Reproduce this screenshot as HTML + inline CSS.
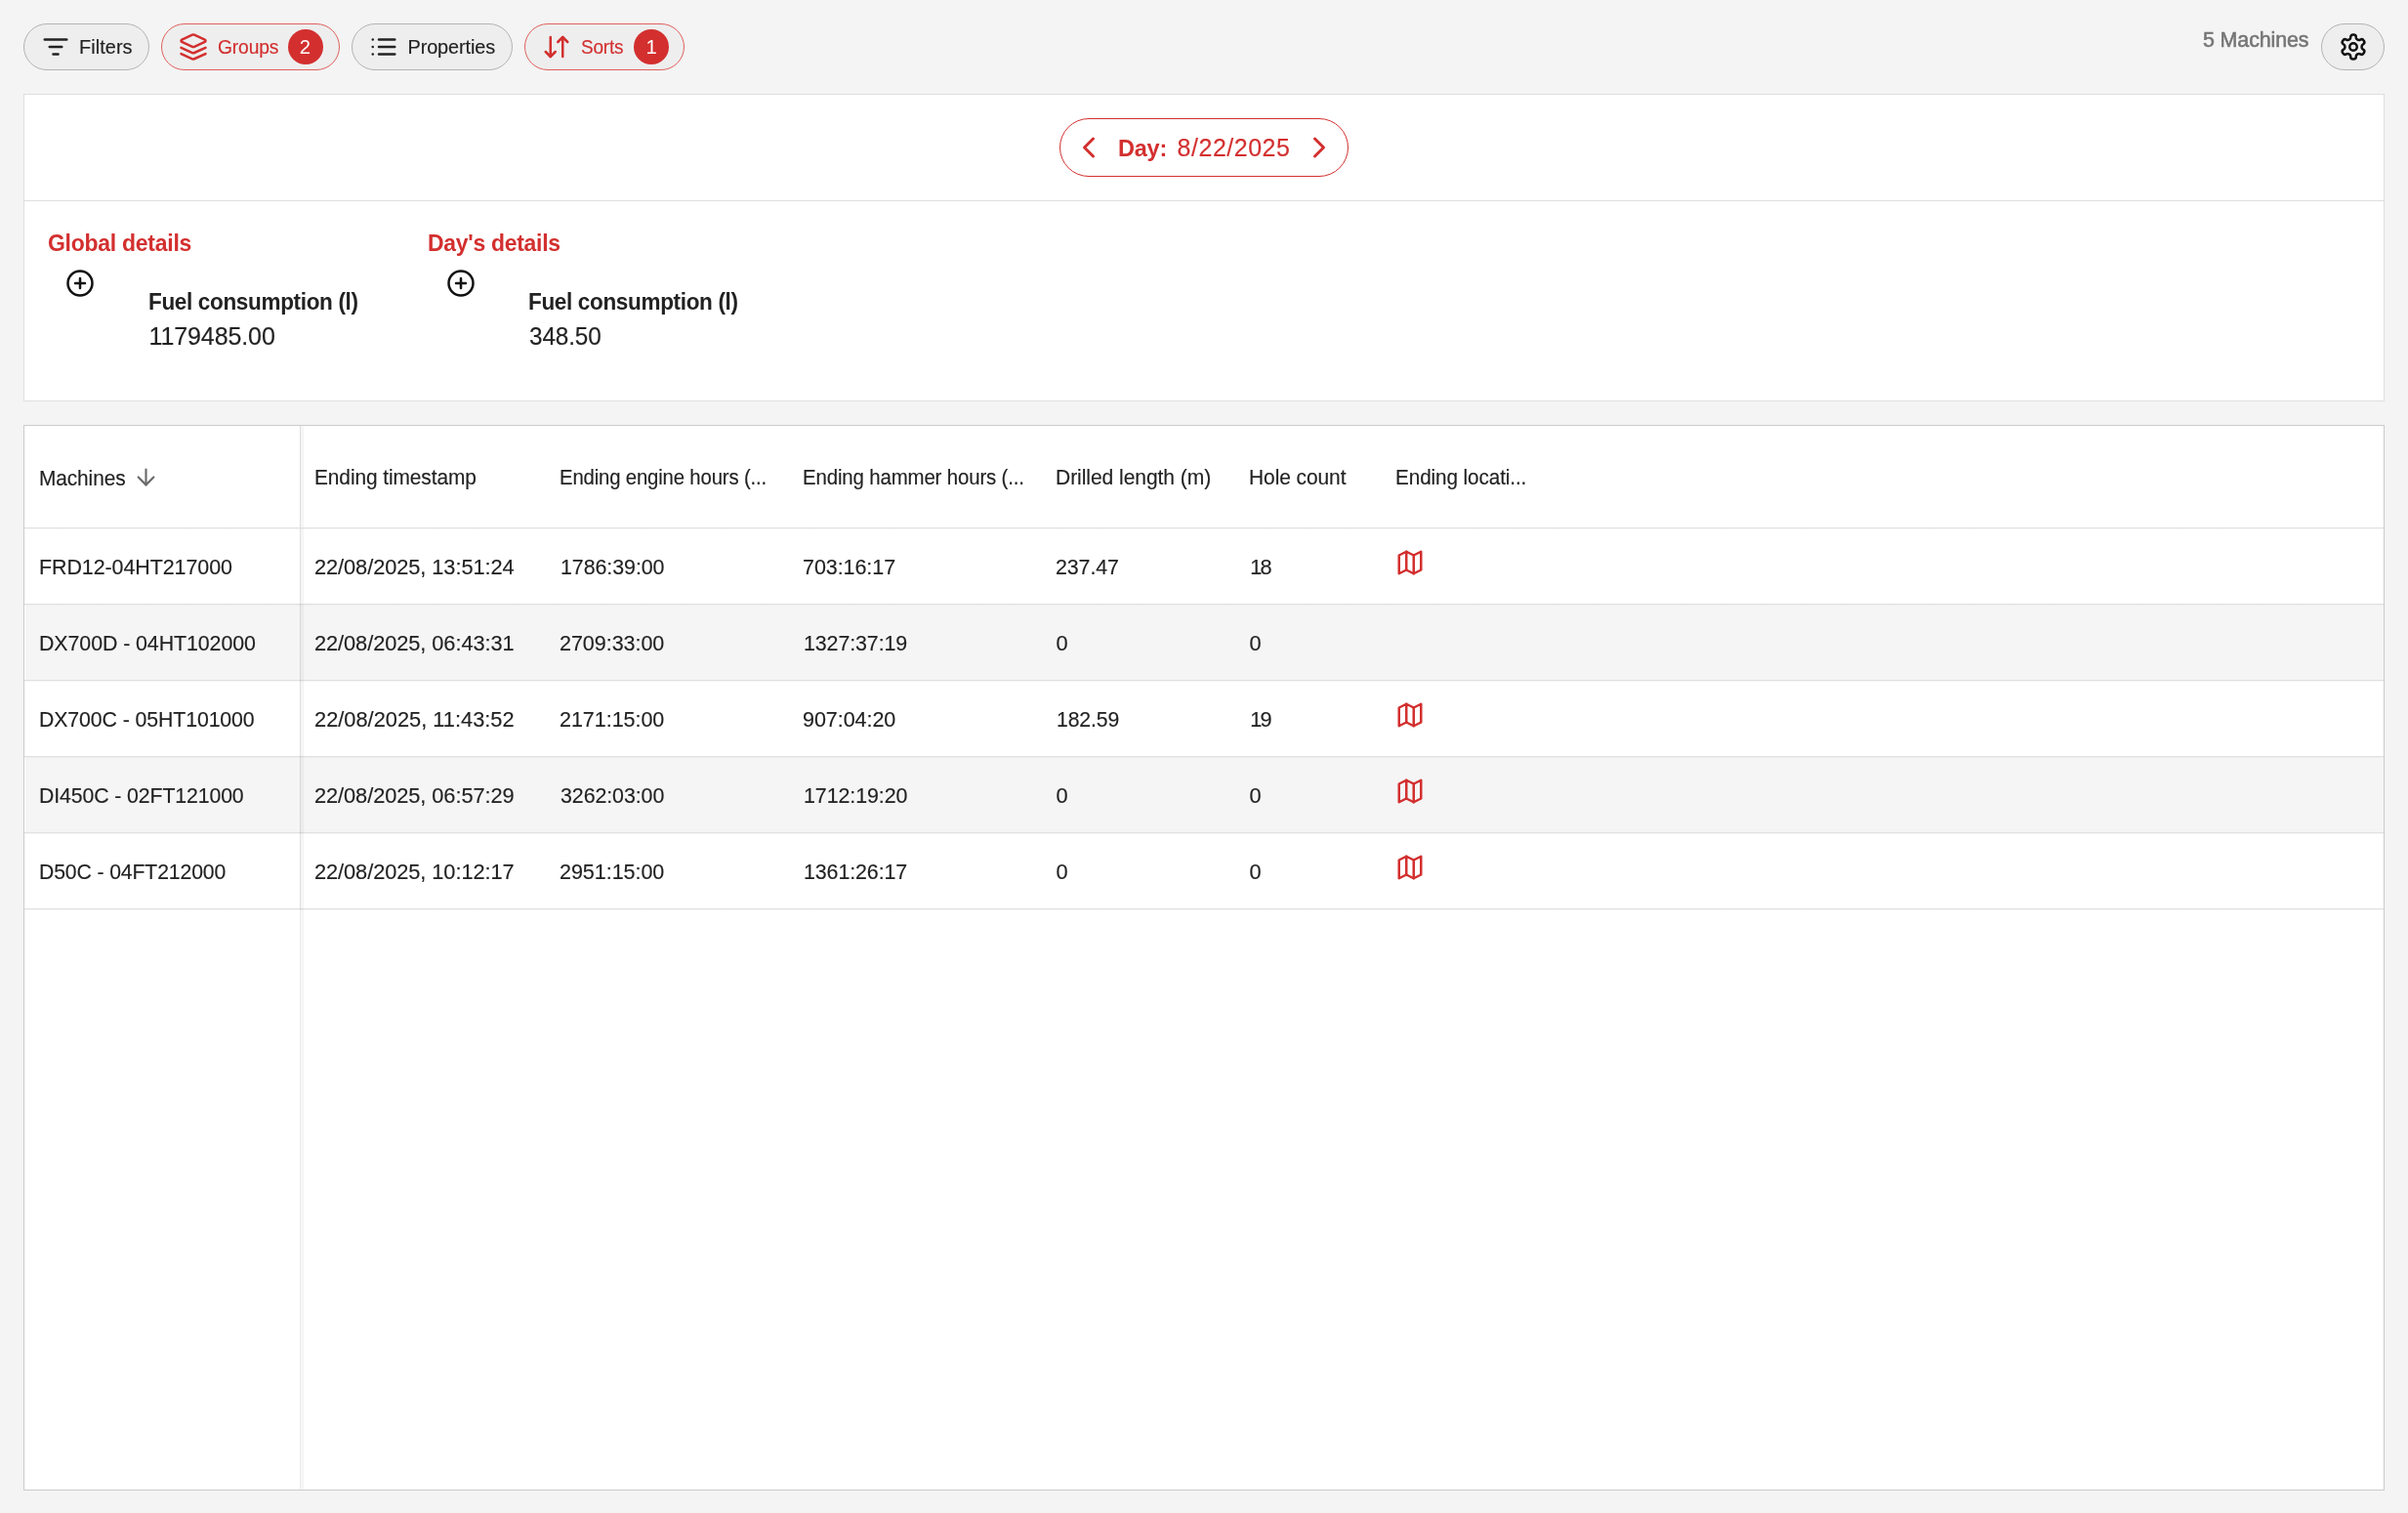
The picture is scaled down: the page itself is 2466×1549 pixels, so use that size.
<!DOCTYPE html>
<html lang="en"><head><meta charset="utf-8"><title>Machines</title>
<style>
html,body{margin:0;padding:0;}
body{width:2466px;height:1549px;background:#f4f4f4;position:relative;overflow:hidden;font-family:"Liberation Sans", sans-serif;}
.t{position:absolute;white-space:nowrap;line-height:40px;height:40px;display:block;transform-origin:0 0;}
#tx{position:absolute;left:0;top:0;width:2466px;height:1549px;will-change:transform;}
.i{position:absolute;display:block;overflow:visible;}
.b{position:absolute;box-sizing:border-box;}
.chip{position:absolute;box-sizing:border-box;top:24px;height:48px;border-radius:24px;background:#eeeeee;border:1px solid #b4b4b4;}
.chip.r{border-color:#e0605d;}
.badge{position:absolute;top:30px;width:36px;height:36px;border-radius:18px;background:#d32f2f;}
.panel{position:absolute;box-sizing:border-box;background:#fff;}
.hl{position:absolute;left:25px;width:2416px;height:2px;background:linear-gradient(to bottom,#e0e0e0 0,#e0e0e0 1px,rgba(224,224,224,0.3) 1px,rgba(224,224,224,0.3) 2px);}
</style></head>
<body>
<div class="chip" style="left:24px;width:129px"></div>
<div class="chip r" style="left:165px;width:183px"></div>
<div class="chip" style="left:360px;width:165px"></div>
<div class="chip r" style="left:537px;width:164px"></div>
<div class="chip" style="left:2377px;width:65px"></div>
<div class="badge" style="left:295px"></div>
<div class="badge" style="left:648.5px"></div>
<div class="panel" style="left:24px;top:96px;width:2418px;height:315px;border:1px solid #dedede"></div>
<div class="b" style="left:25px;top:204.5px;width:2416px;height:1px;background:#dedede"></div>
<div class="b" style="left:1085px;top:121px;width:296px;height:60px;border-radius:30px;border:1.5px solid #d32f2f"></div>
<div class="panel" style="left:24px;top:435px;width:2418px;height:1091px;border:1px solid #cbcbcb"></div>
<div class="b" style="left:25.5px;top:619px;width:2415px;height:78px;background:#f5f5f5"></div>
<div class="b" style="left:25.5px;top:775px;width:2415px;height:78px;background:#f5f5f5"></div>
<div class="hl" style="top:540px"></div>
<div class="hl" style="top:618px"></div>
<div class="hl" style="top:696px"></div>
<div class="hl" style="top:774px"></div>
<div class="hl" style="top:852px"></div>
<div class="hl" style="top:930px"></div>
<div class="b" style="left:307px;top:436px;width:5px;height:104px;background:linear-gradient(to right,rgba(0,0,0,0.135) 0,rgba(0,0,0,0.135) 1px,rgba(0,0,0,0.04) 1px,rgba(0,0,0,0.035) 3.5px,rgba(0,0,0,0) 5px)"></div>
<div class="b" style="left:307px;top:541px;width:5px;height:390px;background:linear-gradient(to right,rgba(0,0,0,0.12) 0,rgba(0,0,0,0.12) 1px,rgba(0,0,0,0.04) 1px,rgba(0,0,0,0.035) 3.5px,rgba(0,0,0,0) 5px)"></div>
<div class="b" style="left:307px;top:931px;width:5px;height:594px;background:linear-gradient(to right,rgba(0,0,0,0.07) 0,rgba(0,0,0,0.07) 1px,rgba(0,0,0,0.04) 1px,rgba(0,0,0,0.035) 3.5px,rgba(0,0,0,0) 5px)"></div>
<svg class="i" style="left:42px;top:33px" width="30" height="30" viewBox="0 0 24 24" fill="none" stroke="#222222" stroke-width="2" stroke-linecap="round" stroke-linejoin="round"><path d="M3 6h18"/><path d="M7 12h10"/><path d="M10 18h4"/></svg>
<svg class="i" style="left:183px;top:33px" width="30" height="30" viewBox="0 0 24 24" fill="none" stroke="#d32f2f" stroke-width="2" stroke-linecap="round" stroke-linejoin="round"><path d="m12.83 2.18a2 2 0 0 0-1.66 0L2.6 6.08a1 1 0 0 0 0 1.83l8.58 3.91a2 2 0 0 0 1.66 0l8.58-3.9a1 1 0 0 0 0-1.83Z"/><path d="m22 17.65-9.17 4.16a2 2 0 0 1-1.66 0L2 17.65"/><path d="m22 12.65-9.17 4.16a2 2 0 0 1-1.66 0L2 12.65"/></svg>
<svg class="i" style="left:378px;top:33px" width="30" height="30" viewBox="0 0 24 24" fill="none" stroke="#222222" stroke-width="2" stroke-linecap="round" stroke-linejoin="round"><path d="M8 6h13"/><path d="M8 12h13"/><path d="M8 18h13"/><path d="M3 6h.01"/><path d="M3 12h.01"/><path d="M3 18h.01"/></svg>
<svg class="i" style="left:555px;top:33px" width="30" height="30" viewBox="0 0 24 24" fill="none" stroke="#d32f2f" stroke-width="2" stroke-linecap="round" stroke-linejoin="round"><path d="m3 16 4 4 4-4"/><path d="M7 20V4"/><path d="m21 8-4-4-4 4"/><path d="M17 4v16"/></svg>
<svg class="i" style="left:2395px;top:33px" width="30" height="30" viewBox="0 0 24 24" fill="none" stroke="#111111" stroke-width="2" stroke-linecap="round" stroke-linejoin="round"><path d="M12.22 2h-.44a2 2 0 0 0-2 2v.18a2 2 0 0 1-1 1.73l-.43.25a2 2 0 0 1-2 0l-.15-.08a2 2 0 0 0-2.73.73l-.22.38a2 2 0 0 0 .73 2.73l.15.1a2 2 0 0 1 1 1.72v.51a2 2 0 0 1-1 1.74l-.15.09a2 2 0 0 0-.73 2.73l.22.38a2 2 0 0 0 2.73.73l.15-.08a2 2 0 0 1 2 0l.43.25a2 2 0 0 1 1 1.73V20a2 2 0 0 0 2 2h.44a2 2 0 0 0 2-2v-.18a2 2 0 0 1 1-1.73l.43-.25a2 2 0 0 1 2 0l.15.08a2 2 0 0 0 2.73-.73l.22-.39a2 2 0 0 0-.73-2.73l-.15-.08a2 2 0 0 1-1-1.74v-.5a2 2 0 0 1 1-1.74l.15-.09a2 2 0 0 0 .73-2.73l-.22-.38a2 2 0 0 0-2.73-.73l-.15.08a2 2 0 0 1-2 0l-.43-.25a2 2 0 0 1-1-1.73V4a2 2 0 0 0-2-2z"/><circle cx="12" cy="12" r="3"/></svg>
<svg class="i" style="left:67px;top:275px" width="30" height="30" viewBox="0 0 24 24" fill="none" stroke="#111111" stroke-width="2" stroke-linecap="round" stroke-linejoin="round"><circle cx="12" cy="12" r="10"/><path d="M8 12h8"/><path d="M12 8v8"/></svg>
<svg class="i" style="left:457px;top:275px" width="30" height="30" viewBox="0 0 24 24" fill="none" stroke="#111111" stroke-width="2" stroke-linecap="round" stroke-linejoin="round"><circle cx="12" cy="12" r="10"/><path d="M8 12h8"/><path d="M12 8v8"/></svg>
<svg class="i" style="left:1096.8px;top:133px" width="36" height="36" viewBox="0 0 24 24" fill="none" stroke="#d32f2f" stroke-width="2" stroke-linecap="round" stroke-linejoin="round"><path d="m15 18-6-6 6-6"/></svg>
<svg class="i" style="left:1332.8px;top:133px" width="36" height="36" viewBox="0 0 24 24" fill="none" stroke="#d32f2f" stroke-width="2" stroke-linecap="round" stroke-linejoin="round"><path d="m9 18 6-6-6-6"/></svg>
<svg class="i" style="left:136px;top:474.5px" width="27" height="27" viewBox="0 0 24 24" fill="none" stroke="#6a6a6a" stroke-width="1.9" stroke-linecap="round" stroke-linejoin="round"><path d="M12 5v14"/><path d="m19 12-7 7-7-7"/></svg>
<svg class="i" style="left:1429px;top:561.1px" width="30" height="30" viewBox="0 0 24 24" fill="none" stroke="#d32f2f" stroke-width="2" stroke-linecap="round" stroke-linejoin="round"><polygon points="3 6 9 3 15 6 21 3 21 18 15 21 9 18 3 21"/><line x1="9" x2="9" y1="3" y2="18"/><line x1="15" x2="15" y1="6" y2="21"/></svg>
<svg class="i" style="left:1429px;top:717.1px" width="30" height="30" viewBox="0 0 24 24" fill="none" stroke="#d32f2f" stroke-width="2" stroke-linecap="round" stroke-linejoin="round"><polygon points="3 6 9 3 15 6 21 3 21 18 15 21 9 18 3 21"/><line x1="9" x2="9" y1="3" y2="18"/><line x1="15" x2="15" y1="6" y2="21"/></svg>
<svg class="i" style="left:1429px;top:795.1px" width="30" height="30" viewBox="0 0 24 24" fill="none" stroke="#d32f2f" stroke-width="2" stroke-linecap="round" stroke-linejoin="round"><polygon points="3 6 9 3 15 6 21 3 21 18 15 21 9 18 3 21"/><line x1="9" x2="9" y1="3" y2="18"/><line x1="15" x2="15" y1="6" y2="21"/></svg>
<svg class="i" style="left:1429px;top:873.1px" width="30" height="30" viewBox="0 0 24 24" fill="none" stroke="#d32f2f" stroke-width="2" stroke-linecap="round" stroke-linejoin="round"><polygon points="3 6 9 3 15 6 21 3 21 18 15 21 9 18 3 21"/><line x1="9" x2="9" y1="3" y2="18"/><line x1="15" x2="15" y1="6" y2="21"/></svg>
<div id="tx">
<span class="t" style="left:81.10px;top:28.00px;font-size:19.9px;letter-spacing:0.050px;color:#222222;-webkit-text-stroke:0.15px #222222;">Filters</span>
<span class="t" style="left:222.53px;top:28.00px;font-size:19.9px;letter-spacing:-0.144px;color:#d32f2f;transform:scaleX(0.9675);-webkit-text-stroke:0.15px #d32f2f;">Groups</span>
<span class="t" style="left:306.80px;top:28.00px;font-size:20.3px;letter-spacing:0.000px;color:#ffffff;">2</span>
<span class="t" style="left:417.50px;top:28.00px;font-size:19.9px;letter-spacing:-0.112px;color:#222222;-webkit-text-stroke:0.15px #222222;">Properties</span>
<span class="t" style="left:594.80px;top:28.00px;font-size:19.9px;letter-spacing:-0.189px;color:#d32f2f;transform:scaleX(0.9535);-webkit-text-stroke:0.15px #d32f2f;">Sorts</span>
<span class="t" style="left:661.50px;top:28.00px;font-size:20.3px;letter-spacing:0.000px;color:#ffffff;">1</span>
<span class="t" style="left:2256.00px;top:21.00px;font-size:22.1px;letter-spacing:-0.130px;color:#757575;transform:scaleX(0.9699);-webkit-text-stroke:0.55px #757575;">5 Machines</span>
<span class="t" style="left:1144.64px;top:132.00px;font-size:24.5px;letter-spacing:-0.239px;color:#d32f2f;transform:scaleX(0.9588);font-weight:700;">Day:</span>
<span class="t" style="left:1205.60px;top:131.00px;font-size:25px;letter-spacing:0.511px;color:#d32f2f;-webkit-text-stroke:0.15px #d32f2f;">8/22/2025</span>
<span class="t" style="left:48.56px;top:229.00px;font-size:24.5px;letter-spacing:-0.271px;color:#d32f2f;transform:scaleX(0.9376);font-weight:700;">Global details</span>
<span class="t" style="left:438.36px;top:229.00px;font-size:24.5px;letter-spacing:-0.283px;color:#d32f2f;transform:scaleX(0.9353);font-weight:700;">Day's details</span>
<span class="t" style="left:151.58px;top:289.00px;font-size:24.5px;letter-spacing:-0.368px;color:#222222;transform:scaleX(0.9191);font-weight:700;">Fuel consumption (l)</span>
<span class="t" style="left:152.50px;top:324.00px;font-size:25px;letter-spacing:-0.102px;color:#222222;-webkit-text-stroke:0.15px #222222;">1179485.00</span>
<span class="t" style="left:541.28px;top:289.00px;font-size:24.5px;letter-spacing:-0.368px;color:#222222;transform:scaleX(0.9191);font-weight:700;">Fuel consumption (l)</span>
<span class="t" style="left:541.80px;top:324.00px;font-size:25px;letter-spacing:-0.137px;color:#222222;transform:scaleX(0.9736);-webkit-text-stroke:0.15px #222222;">348.50</span>
<span class="t" style="left:39.92px;top:470.00px;font-size:21.4px;letter-spacing:-0.108px;color:#222222;transform:scaleX(0.9754);-webkit-text-stroke:0.15px #222222;">Machines</span>
<span class="t" style="left:322.02px;top:469.00px;font-size:21.4px;letter-spacing:-0.091px;color:#222222;transform:scaleX(0.9765);-webkit-text-stroke:0.15px #222222;">Ending timestamp</span>
<span class="t" style="left:572.75px;top:469.00px;font-size:21.4px;letter-spacing:-0.170px;color:#222222;transform:scaleX(0.9502);-webkit-text-stroke:0.15px #222222;">Ending engine hours (...</span>
<span class="t" style="left:821.74px;top:469.00px;font-size:21.4px;letter-spacing:-0.162px;color:#222222;transform:scaleX(0.9553);-webkit-text-stroke:0.15px #222222;">Ending hammer hours (...</span>
<span class="t" style="left:1081.27px;top:469.00px;font-size:21.4px;letter-spacing:-0.054px;color:#222222;transform:scaleX(0.9833);-webkit-text-stroke:0.15px #222222;">Drilled length (m)</span>
<span class="t" style="left:1279.22px;top:469.00px;font-size:21.4px;letter-spacing:-0.077px;color:#222222;transform:scaleX(0.9799);-webkit-text-stroke:0.15px #222222;">Hole count</span>
<span class="t" style="left:1429.23px;top:469.00px;font-size:21.4px;letter-spacing:-0.101px;color:#222222;transform:scaleX(0.9679);-webkit-text-stroke:0.15px #222222;">Ending locati...</span>
<span class="t" style="left:40.12px;top:561.00px;font-size:21.8px;letter-spacing:-0.074px;color:#222222;transform:scaleX(0.9837);-webkit-text-stroke:0.15px #222222;">FRD12-04HT217000</span>
<span class="t" style="left:322.00px;top:561.00px;font-size:21.8px;letter-spacing:-0.075px;color:#222222;-webkit-text-stroke:0.15px #222222;">22/08/2025, 13:51:24</span>
<span class="t" style="left:573.52px;top:561.00px;font-size:21.8px;letter-spacing:-0.073px;color:#222222;transform:scaleX(0.9822);-webkit-text-stroke:0.15px #222222;">1786:39:00</span>
<span class="t" style="left:821.71px;top:561.00px;font-size:21.8px;letter-spacing:-0.059px;color:#222222;transform:scaleX(0.9856);-webkit-text-stroke:0.15px #222222;">703:16:17</span>
<span class="t" style="left:1080.92px;top:561.00px;font-size:21.8px;letter-spacing:-0.084px;color:#222222;transform:scaleX(0.9812);-webkit-text-stroke:0.15px #222222;">237.47</span>
<span class="t" style="left:1280.30px;top:561.00px;font-size:21.8px;letter-spacing:-1.822px;color:#222222;-webkit-text-stroke:0.15px #222222;">18</span>
<span class="t" style="left:40.12px;top:639.00px;font-size:21.8px;letter-spacing:-0.083px;color:#222222;transform:scaleX(0.9806);-webkit-text-stroke:0.15px #222222;">DX700D - 04HT102000</span>
<span class="t" style="left:322.00px;top:639.00px;font-size:21.8px;letter-spacing:-0.075px;color:#222222;-webkit-text-stroke:0.15px #222222;">22/08/2025, 06:43:31</span>
<span class="t" style="left:572.71px;top:639.00px;font-size:21.8px;letter-spacing:-0.050px;color:#222222;transform:scaleX(0.9877);-webkit-text-stroke:0.15px #222222;">2709:33:00</span>
<span class="t" style="left:822.52px;top:639.00px;font-size:21.8px;letter-spacing:-0.081px;color:#222222;transform:scaleX(0.9801);-webkit-text-stroke:0.15px #222222;">1327:37:19</span>
<span class="t" style="left:1081.50px;top:639.00px;font-size:21.8px;letter-spacing:0.000px;color:#222222;-webkit-text-stroke:0.15px #222222;">0</span>
<span class="t" style="left:1279.50px;top:639.00px;font-size:21.8px;letter-spacing:0.000px;color:#222222;-webkit-text-stroke:0.15px #222222;">0</span>
<span class="t" style="left:40.12px;top:717.00px;font-size:21.8px;letter-spacing:-0.101px;color:#222222;transform:scaleX(0.9766);-webkit-text-stroke:0.15px #222222;">DX700C - 05HT101000</span>
<span class="t" style="left:322.00px;top:717.00px;font-size:21.8px;letter-spacing:0.010px;color:#222222;-webkit-text-stroke:0.15px #222222;">22/08/2025, 11:43:52</span>
<span class="t" style="left:572.71px;top:717.00px;font-size:21.8px;letter-spacing:-0.050px;color:#222222;transform:scaleX(0.9877);-webkit-text-stroke:0.15px #222222;">2171:15:00</span>
<span class="t" style="left:821.71px;top:717.00px;font-size:21.8px;letter-spacing:-0.052px;color:#222222;transform:scaleX(0.9871);-webkit-text-stroke:0.15px #222222;">907:04:20</span>
<span class="t" style="left:1081.83px;top:717.00px;font-size:21.8px;letter-spacing:-0.126px;color:#222222;transform:scaleX(0.9720);-webkit-text-stroke:0.15px #222222;">182.59</span>
<span class="t" style="left:1280.30px;top:717.00px;font-size:21.8px;letter-spacing:-1.822px;color:#222222;-webkit-text-stroke:0.15px #222222;">19</span>
<span class="t" style="left:40.12px;top:795.00px;font-size:21.8px;letter-spacing:-0.102px;color:#222222;transform:scaleX(0.9751);-webkit-text-stroke:0.15px #222222;">DI450C - 02FT121000</span>
<span class="t" style="left:322.00px;top:795.00px;font-size:21.8px;letter-spacing:-0.075px;color:#222222;-webkit-text-stroke:0.15px #222222;">22/08/2025, 06:57:29</span>
<span class="t" style="left:573.70px;top:795.00px;font-size:21.8px;letter-spacing:-0.078px;color:#222222;transform:scaleX(0.9809);-webkit-text-stroke:0.15px #222222;">3262:03:00</span>
<span class="t" style="left:822.52px;top:795.00px;font-size:21.8px;letter-spacing:-0.076px;color:#222222;transform:scaleX(0.9815);-webkit-text-stroke:0.15px #222222;">1712:19:20</span>
<span class="t" style="left:1081.50px;top:795.00px;font-size:21.8px;letter-spacing:0.000px;color:#222222;-webkit-text-stroke:0.15px #222222;">0</span>
<span class="t" style="left:1279.50px;top:795.00px;font-size:21.8px;letter-spacing:0.000px;color:#222222;-webkit-text-stroke:0.15px #222222;">0</span>
<span class="t" style="left:40.13px;top:873.00px;font-size:21.8px;letter-spacing:-0.119px;color:#222222;transform:scaleX(0.9720);-webkit-text-stroke:0.15px #222222;">D50C - 04FT212000</span>
<span class="t" style="left:322.00px;top:873.00px;font-size:21.8px;letter-spacing:-0.075px;color:#222222;-webkit-text-stroke:0.15px #222222;">22/08/2025, 10:12:17</span>
<span class="t" style="left:572.71px;top:873.00px;font-size:21.8px;letter-spacing:-0.050px;color:#222222;transform:scaleX(0.9877);-webkit-text-stroke:0.15px #222222;">2951:15:00</span>
<span class="t" style="left:822.52px;top:873.00px;font-size:21.8px;letter-spacing:-0.081px;color:#222222;transform:scaleX(0.9801);-webkit-text-stroke:0.15px #222222;">1361:26:17</span>
<span class="t" style="left:1081.50px;top:873.00px;font-size:21.8px;letter-spacing:0.000px;color:#222222;-webkit-text-stroke:0.15px #222222;">0</span>
<span class="t" style="left:1279.50px;top:873.00px;font-size:21.8px;letter-spacing:0.000px;color:#222222;-webkit-text-stroke:0.15px #222222;">0</span>
</div>
</body></html>
